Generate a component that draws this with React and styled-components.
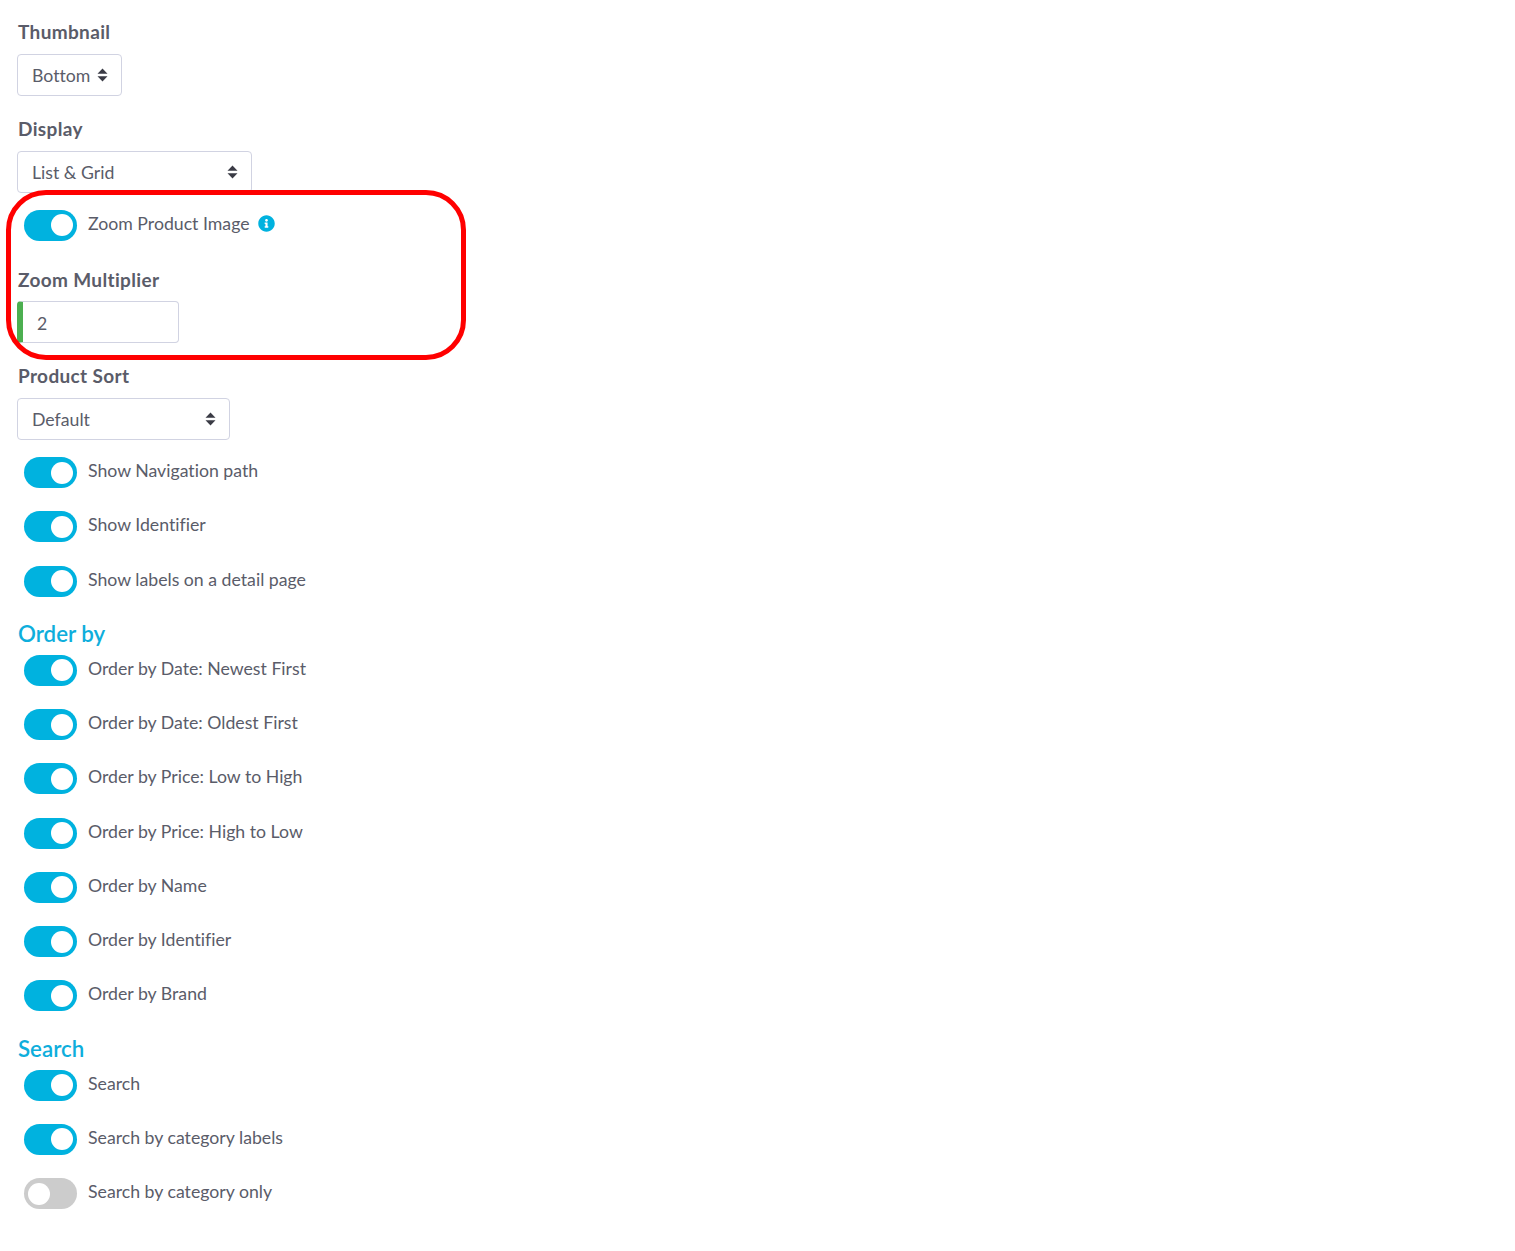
import React from 'react'
import styled, { createGlobalStyle } from 'styled-components'

const Global = createGlobalStyle`
    html, body {
        margin: 0;
        padding: 0;
        background: #fff;
    }
    body {
        font-family: 'Lato', 'Noto Sans', sans-serif;
        font-variant-ligatures: none;
        color: #5a5c69;
    }
`;

const Page = styled.div`
    position: relative;
    height: 1251px;
    padding: 16.25px 0 0 17px;
    box-sizing: border-box;
`;

const Group = styled.div`
    display: flex;
    flex-direction: column;
    align-items: flex-start;
    margin-bottom: 17px;
`;

const Label = styled.label`
    display: block;
    height: 22px;
    line-height: 22px;
    font-size: 19px;
    font-weight: 700;
    letter-spacing: 0.35px;
    color: #5a5c69;
    margin: 5px 0 10.65px 1px;
`;

const Select = styled.div`
    box-sizing: border-box;
    width: ${(p) => p.$w}px;
    height: 42px;
    display: flex;
    align-items: center;
    justify-content: space-between;
    padding: 1px 13px 0 14px;
    background: #fff;
    border: 1px solid #d1d3e2;
    border-radius: 4px;
    font-size: 17.7px;
    color: #5a5c69;
`;

const Carets = styled.svg`
    width: 11px;
    height: 14px;
    flex: none;
    margin-top: -1px;
`;

const NumberInput = styled.div`
    box-sizing: border-box;
    width: 162px;
    height: 42px;
    display: flex;
    align-items: center;
    padding: 2px 0 0 14px;
    border: 1px solid #d1d3e2;
    border-left: 6px solid #4caf50;
    border-radius: 4px;
    font-size: 17.7px;
    color: #5a5c69;
`;

const Row = styled.div`
    display: flex;
    align-items: flex-start;
    height: 31px;
    margin: 0 0 23.25px 7px;
`;

const Track = styled.div`
    box-sizing: border-box;
    width: 53px;
    height: 31px;
    flex: none;
    display: flex;
    align-items: center;
    justify-content: ${(p) => (p.$on ? 'flex-end' : 'flex-start')};
    padding: 0 4px;
    border-radius: 16px;
    background: ${(p) => (p.$on ? '#00b2df' : '#ccc')};
`;

const Knob = styled.div`
    width: 22px;
    height: 22px;
    border-radius: 50%;
    background: #fff;
`;

const RowText = styled.span`
    display: inline-flex;
    align-items: center;
    gap: 8px;
    height: 27px;
    margin-left: 11px;
    font-size: 17.7px;
    color: #5a5c69;
    white-space: nowrap;
`;

const InfoIcon = styled.svg`
    width: 17px;
    height: 17px;
    fill: #00b2df;
`;

const Heading = styled.h3`
    height: 29px;
    line-height: 27px;
    margin: 0 0 6px 1px;
    font-size: 22.3px;
    font-weight: 600;
    color: #0eaedc;
`;

const Highlight = styled.div`
    position: absolute;
    left: 6px;
    top: 190px;
    width: 460px;
    height: 170px;
    box-sizing: border-box;
    border: 5px solid #f00;
    border-radius: 40px;
    pointer-events: none;
`;

const SelectBox = ({ w, children }) => (
    <Select $w={w}>
        {children}
        <Carets viewBox="0 0 11 14">
            <path d="M5.5 0.5 L10.5 5.8 H0.5 Z M0.5 8.2 H10.5 L5.5 13.5 Z" fill="#3a3b45" />
        </Carets>
    </Select>
);

const Toggle = ({ on = true, children }) => (
    <Row>
        <Track $on={on}>
            <Knob />
        </Track>
        <RowText>{children}</RowText>
    </Row>
);

const App = () => {
    return (
        <>
            <Global />
            <Page>
                <Group>
                    <Label>Thumbnail</Label>
                    <SelectBox w={105}>Bottom</SelectBox>
                </Group>
                <Group>
                    <Label>Display</Label>
                    <SelectBox w={235}>List &amp; Grid</SelectBox>
                </Group>

                <Toggle>
                    Zoom Product Image
                    <InfoIcon viewBox="0 0 512 512">
                        <path d="M256 8C119 8 8 119 8 256s111 248 248 248 248-111 248-248S393 8 256 8zm0 110c23 0 42 19 42 42s-19 42-42 42-42-19-42-42 19-42 42-42zm56 254c0 7-5 12-12 12h-88c-7 0-12-5-12-12v-24c0-7 5-12 12-12h12v-64h-12c-7 0-12-5-12-12v-24c0-7 5-12 12-12h64c7 0 12 5 12 12v100h12c7 0 12 5 12 12v24z" />
                    </InfoIcon>
                </Toggle>

                <Group>
                    <Label>Zoom Multiplier</Label>
                    <NumberInput>2</NumberInput>
                </Group>
                <Group>
                    <Label>Product Sort</Label>
                    <SelectBox w={213}>Default</SelectBox>
                </Group>

                <Toggle>Show Navigation path</Toggle>
                <Toggle>Show Identifier</Toggle>
                <Toggle>Show labels on a detail page</Toggle>

                <Heading>Order by</Heading>
                <Toggle>Order by Date: Newest First</Toggle>
                <Toggle>Order by Date: Oldest First</Toggle>
                <Toggle>Order by Price: Low to High</Toggle>
                <Toggle>Order by Price: High to Low</Toggle>
                <Toggle>Order by Name</Toggle>
                <Toggle>Order by Identifier</Toggle>
                <Toggle>Order by Brand</Toggle>

                <Heading>Search</Heading>
                <Toggle>Search</Toggle>
                <Toggle>Search by category labels</Toggle>
                <Toggle on={false}>Search by category only</Toggle>

                <Highlight />
            </Page>
        </>
    )
}

export default App
